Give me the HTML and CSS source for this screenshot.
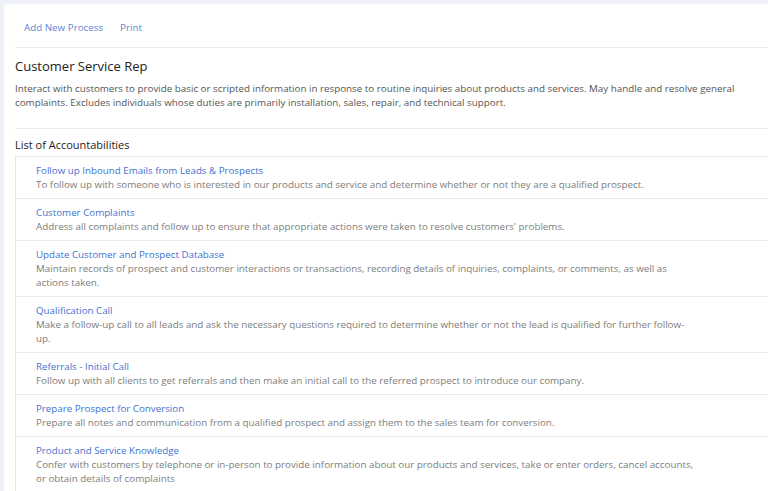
FILE: index.html
```html
<!DOCTYPE html>
<html lang="en">
<head>
    <meta charset="UTF-8">
    <meta name="viewport" content="width=device-width, initial-scale=1.0">
    <title>Customer Service Rep - Processes</title>
    <link rel="stylesheet" href="styles.css">
</head>
<body>

<div class="card">
    <!-- toolbar -->
    <div class="toolbar">
        <a href="#">Add New Process</a>
        <a href="#">Print</a>
    </div>

    <!-- role summary -->
    <div class="role">
        <h2>Customer Service Rep</h2>
        <p>Interact with customers to provide basic or scripted information in response to routine inquiries about products and services. May handle and resolve general complaints. Excludes individuals whose duties are primarily installation, sales, repair, and technical support.</p>
    </div>

    <!-- accountabilities -->
    <div class="accountabilities">
        <h3>List of Accountabilities</h3>
        <ul class="acc-list" id="acc-list"></ul>
    </div>
</div>

<script>
    const items = [
        ["Follow up Inbound Emails from Leads & Prospects", "To follow up with someone who is interested in our products and service and determine whether or not they are a qualified prospect."],
        ["Customer Complaints", "Address all complaints and follow up to ensure that appropriate actions were taken to resolve customers' problems."],
        ["Update Customer and Prospect Database", "Maintain records of prospect and customer interactions or transactions, recording details of inquiries, complaints, or comments, as well as actions taken."],
        ["Qualification Call", "Make a follow-up call to all leads and ask the necessary questions required to determine whether or not the lead is qualified for further follow-up."],
        ["Referrals - Initial Call", "Follow up with all clients to get referrals and then make an initial call to the referred prospect to introduce our company."],
        ["Prepare Prospect for Conversion", "Prepare all notes and communication from a qualified prospect and assign them to the sales team for conversion."],
        ["Product and Service Knowledge", "Confer with customers by telephone or in-person to provide information about our products and services, take or enter orders, cancel accounts, or obtain details of complaints"]
    ];

    const list = document.getElementById("acc-list");
    items.forEach(([title, desc]) => {
        const li = document.createElement("li");
        li.innerHTML = `<a href="#">${title}</a><p>${desc}</p>`;
        list.appendChild(li);
    });
</script>

</body>
</html>
```

FILE: styles.css
```css
* {
    margin: 0;
    padding: 0;
    box-sizing: border-box;
}

body {
    font-family: "Open Sans", Arial, sans-serif;
    background: #eef2f8;
    color: #555;
    overflow: hidden;
}

a {
    text-decoration: none;
    color: #4a7bd4;
}

ul {
    list-style: none;
}

/* card */
.card {
    margin: 4px 0 0 4px;
    width: 820px;
    min-height: 600px;
    background: #fff;
    border-radius: 4px;
    padding-left: 11px;
}

.toolbar {
    display: flex;
    align-items: center;
    height: 44px;
    padding-top: 3px;
    border-bottom: 1px solid #ebedf0;
}

.toolbar a {
    font-size: 9.8px;
    padding: 0 9px;
    color: #5b88d6;
}

.toolbar a + a {
    padding-left: 8px;
}

/* role */
.role {
    padding: 9px 0 18px;
    border-bottom: 1px solid #ebedf0;
}

.role h2 {
    font-size: 13px;
    font-weight: 400;
    color: #222;
    line-height: 18px;
    margin-bottom: 7px;
}

.role p {
    font-size: 9.8px;
    line-height: 14px;
    color: #555;
    max-width: 745px;
}

/* accountabilities */
.accountabilities h3 {
    font-size: 11px;
    font-weight: 400;
    color: #222;
    line-height: 16px;
    padding: 8px 0 3px;
}

.acc-list {
    border: 1px solid #e3e6ea;
    border-right: none;
}

.acc-list li {
    padding: 7px 0 6px 20px;
    border-bottom: 1px solid #e8eaed;
}

.acc-list a {
    display: block;
    font-size: 9.75px;
    line-height: 14px;
    color: #3f72d0;
}

.acc-list p {
    font-size: 9.8px;
    line-height: 14px;
    color: #7d7d7d;
    max-width: 661px;
}
```
